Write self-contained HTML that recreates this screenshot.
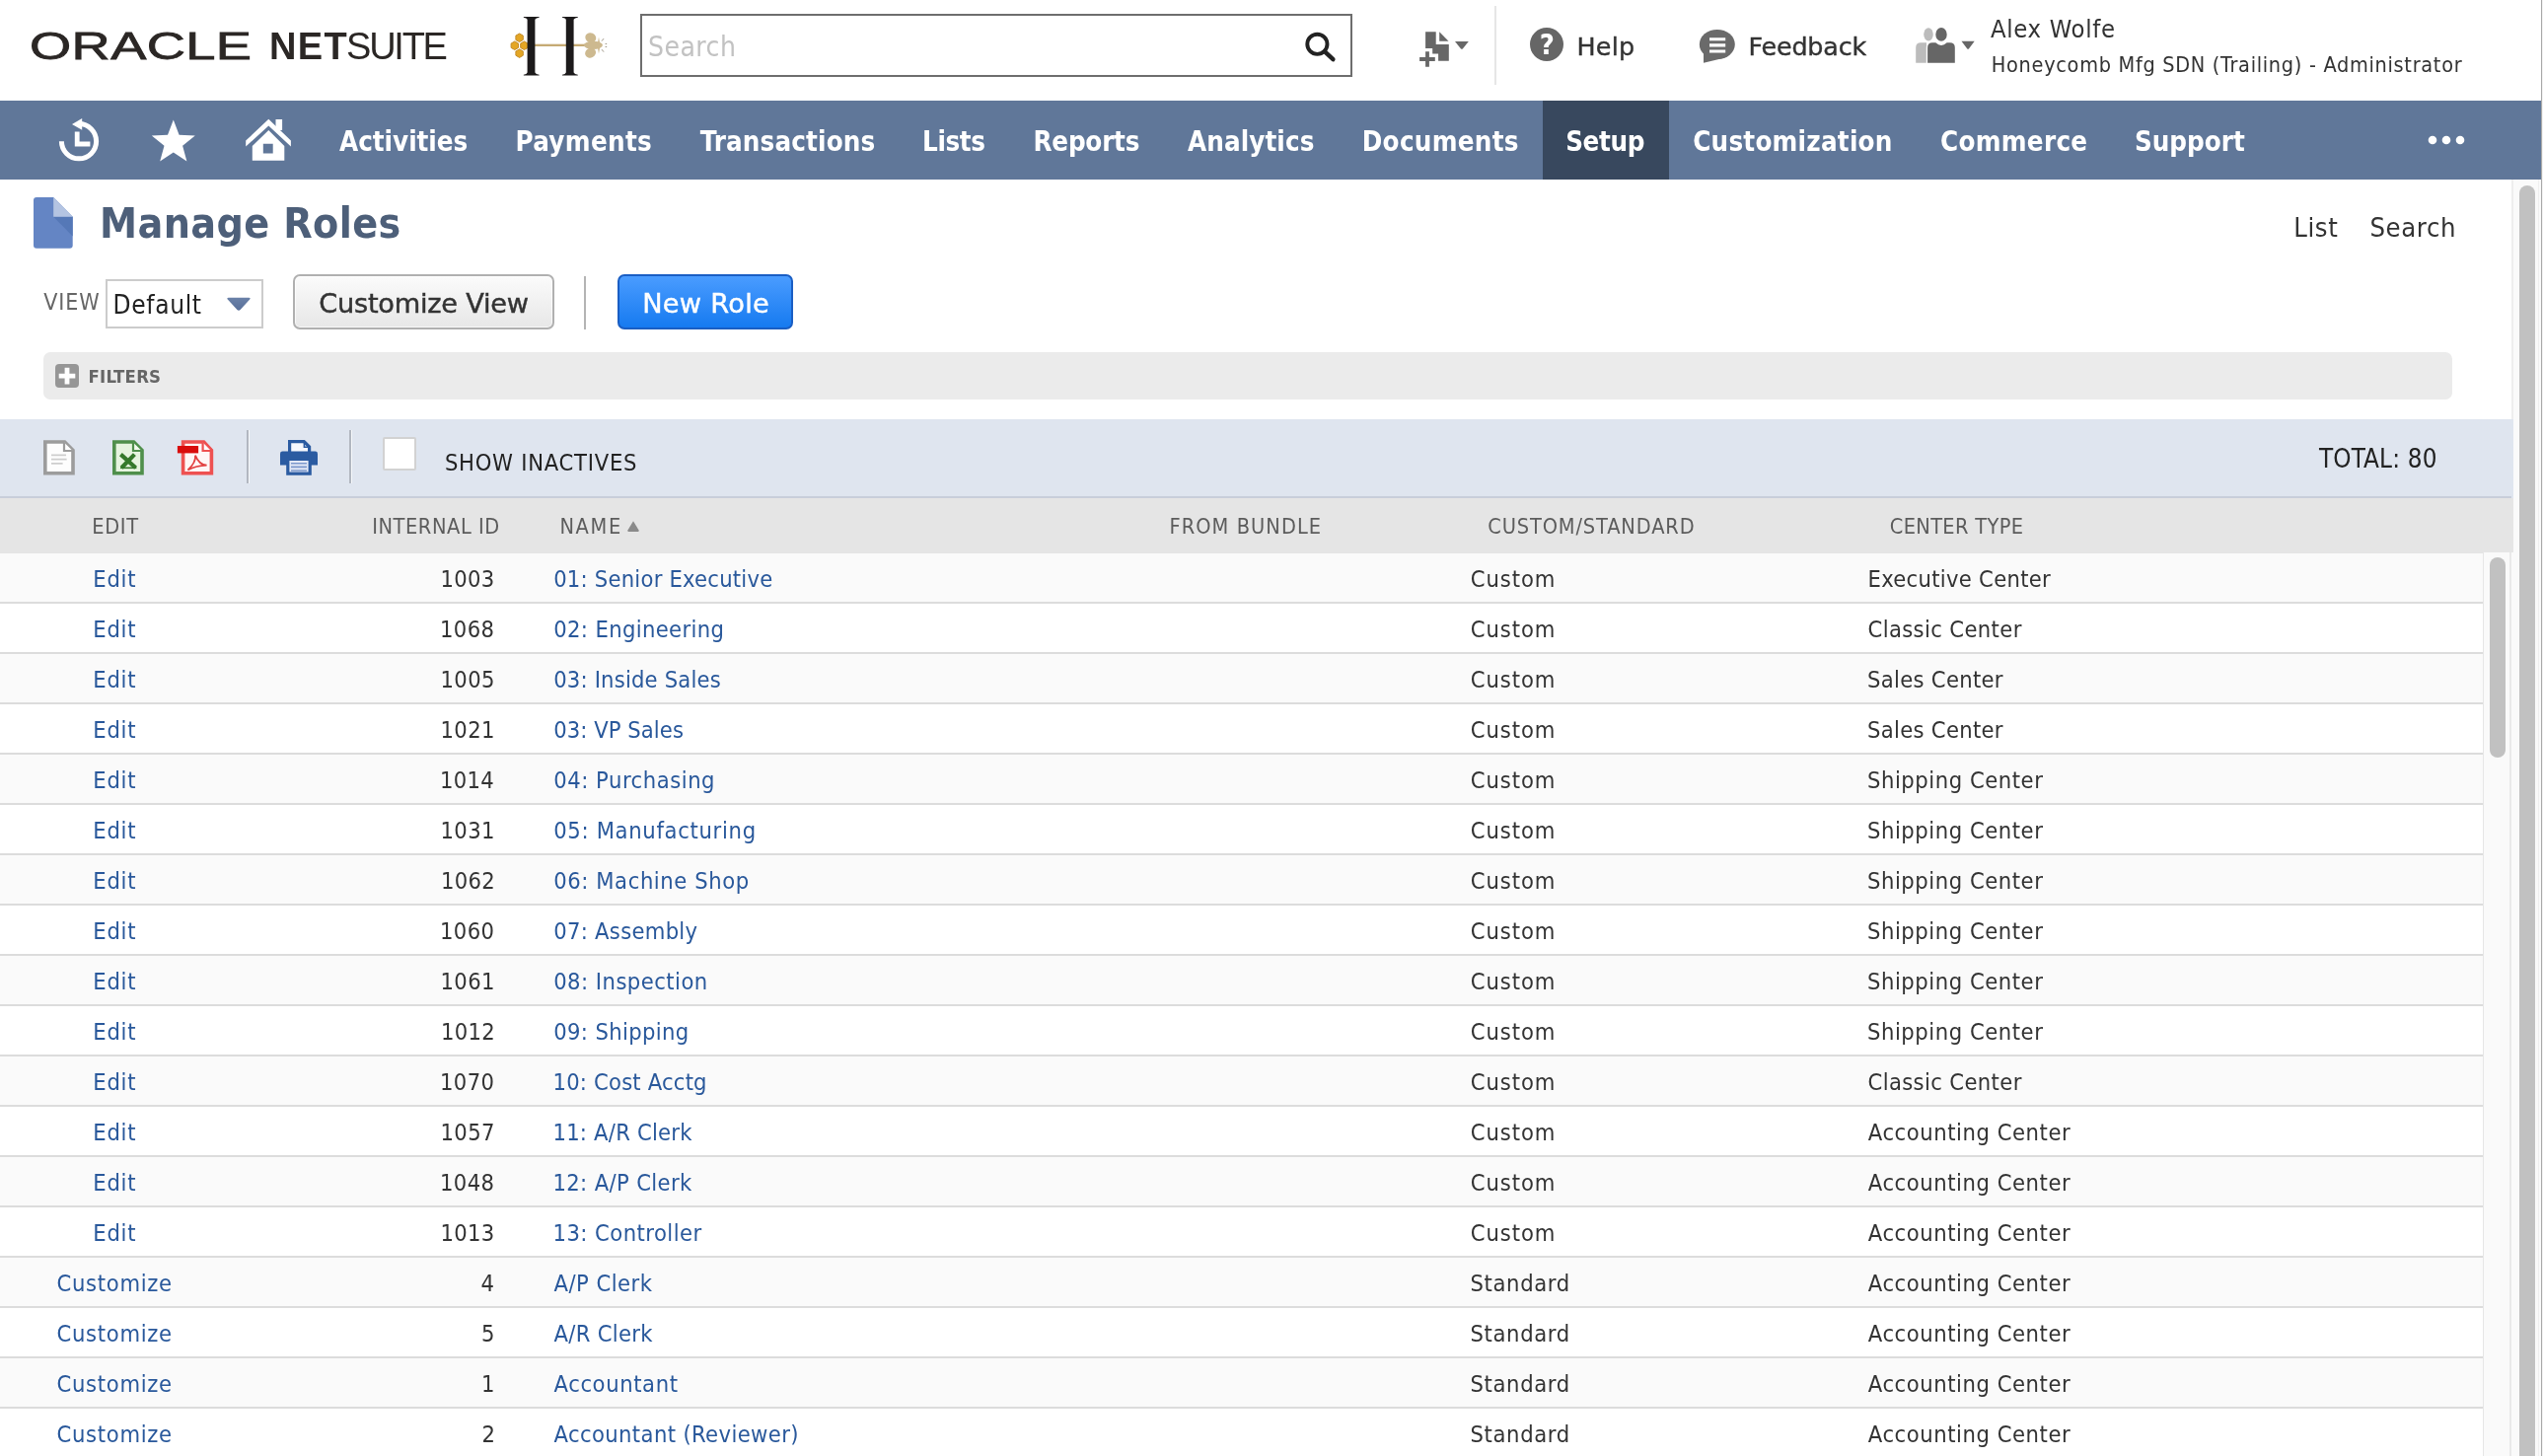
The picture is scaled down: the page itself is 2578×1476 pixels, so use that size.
<!DOCTYPE html>
<html lang="en"><head><meta charset="utf-8"><title>Manage Roles - NetSuite</title>
<style>
html,body{margin:0;padding:0;background:#fff;}
body{width:2578px;height:1476px;overflow:hidden;position:relative;will-change:transform;font-family:'DejaVu Sans Condensed','DejaVu Sans','Liberation Sans',sans-serif;font-stretch:condensed;color:#333;}
.t{position:absolute;white-space:nowrap;line-height:1;}
a.t{text-decoration:none;color:#29589b;}
svg{display:block;overflow:visible;}
</style></head>
<body>
<!-- top header -->
<header>
<div class="t" style="left:29.8px;top:27.2px;font-family:'Liberation Sans',sans-serif;font-stretch:normal;font-size:39.6px;color:#2b2725;transform-origin:0 0;transform:scaleX(1.37);letter-spacing:0.3px;-webkit-text-stroke:0.8px #2b2725;">ORACLE</div>
<div class="t" style="left:272.9px;top:28.3px;font-size:38px;color:#2b2725;font-weight:700;letter-spacing:1.38px;font-family:'Liberation Sans',sans-serif;font-stretch:normal;">NET</div>
<div class="t" style="left:351.1px;top:28.3px;font-size:38px;color:#2b2725;letter-spacing:-2.27px;font-family:'Liberation Sans',sans-serif;font-stretch:normal;">SUITE</div>
<svg style="position:absolute;left:515px;top:14px" width="104" height="64" viewBox="0 0 104 64">
<g fill="#e4a624" stroke="#c48d2c" stroke-width="1"><polygon points="11.6,20.0 15.3,22.1 15.3,26.4 11.6,28.6 7.9,26.5 7.9,22.1"/><polygon points="6.8,27.9 10.5,30.1 10.5,34.4 6.8,36.5 3.1,34.4 3.1,30.1"/><polygon points="16.4,27.9 20.1,30.1 20.1,34.4 16.4,36.5 12.7,34.4 12.7,30.1"/><polygon points="11.6,35.8 15.3,38.0 15.3,42.2 11.6,44.4 7.9,42.2 7.9,38.0"/></g>
<rect x="27" y="30.7" width="53" height="2.3" fill="#c5aa74"/>
<g fill="#1c1a1b"><path d="M15.8 2.9 H31.6 V3.7 Q28.2 4 27.4 5.8 V59.6 Q28.2 61.4 31.6 61.7 V62.5 H15.8 V61.7 Q19 61.4 19.6 59.6 V5.8 Q19 4 15.8 3.7z"/><path d="M15.8 2.9 H31.6 V3.7 Q28.2 4 27.4 5.8 V59.6 Q28.2 61.4 31.6 61.7 V62.5 H15.8 V61.7 Q19 61.4 19.6 59.6 V5.8 Q19 4 15.8 3.7z" transform="translate(39.2 0)"/></g>
<g fill="#cdb98f">
<ellipse cx="83.8" cy="24.2" rx="5.6" ry="4.9" transform="rotate(25 83.8 24.2)"/>
<ellipse cx="83.6" cy="39.6" rx="5.6" ry="4.9" transform="rotate(-25 83.6 39.6)"/>
<ellipse cx="86.4" cy="31.8" rx="9.6" ry="4.1"/>
<polygon points="90.6,31 92,23.4 93.4,31"/><polygon points="90.6,32.6 92,40.6 93.4,32.6"/>
</g>
<g stroke="#9c9484" stroke-width="1" fill="none"><path d="M95 27.6 l2 -2.4 M98.6 30.4 h1.6 M98.6 33.4 h1.6 M95 36.2 l2 2.4"/></g>
</svg>
<div style="position:absolute;left:649px;top:14px;width:722px;height:64px;box-sizing:border-box;border:2px solid #6e6e6e;background:#fff;"></div>
<div class="t" style="left:656.9px;top:34.0px;font-size:28px;color:#c2c2c2;letter-spacing:0.50px;">Search</div>
<svg style="position:absolute;left:1320px;top:30px" width="36" height="34" viewBox="0 0 36 34"><circle cx="15.4" cy="14.8" r="10.1" fill="none" stroke="#222" stroke-width="3.9"/><path d="M22.8 22.2 L31.4 30.2" stroke="#222" stroke-width="4.4" stroke-linecap="round"/></svg>
<svg style="position:absolute;left:1438px;top:30px" width="54" height="40" viewBox="0 0 54 40">
<path d="M7.1 2.2 H17.7 V15.1 H30.8 V31.8 H20.1 V24.6 H14.2 V18.9 H7.1z" fill="#676767"/>
<path d="M21.2 2.3 L30.5 11.8 H21.2z" fill="#676767"/>
<path d="M9 22.2 V37.85 M1.1 30 H16.8" stroke="#676767" stroke-width="3.8"/>
<path d="M37 12.1 H50.8 L45 19.2 Q43.9 20.3 42.8 19.2z" fill="#676767"/>
</svg>
<div style="position:absolute;left:1515px;top:6px;width:2px;height:80px;background:#e6e6e6;"></div>
<div style="position:absolute;left:1551px;top:27.7px;width:34px;height:34.0px;background:#666;border-radius:50%;"></div>
<div class="t" style="left:1560.7px;top:31.2px;font-size:29px;color:#fff;font-weight:700;">?</div>
<div class="t" style="left:1598.5px;top:34.9px;font-size:25.4px;color:#333;letter-spacing:0.27px;font-family:'DejaVu Sans',sans-serif;font-stretch:normal;-webkit-text-stroke:0.4px #333;">Help</div>
<svg style="position:absolute;left:1722px;top:28px" width="40" height="38" viewBox="0 0 40 38">
<ellipse cx="18.8" cy="17" rx="18" ry="15.1" fill="#6a6a6a"/>
<path d="M5 22 V35.8 L27 30.4z" fill="#6a6a6a"/>
<path d="M11 11.8 h16.2 M11 17.9 h16.2 M11 24 h16.2" stroke="#fff" stroke-width="3.1"/>
</svg>
<div class="t" style="left:1772.5px;top:34.9px;font-size:25.4px;color:#333;letter-spacing:-0.18px;font-family:'DejaVu Sans',sans-serif;font-stretch:normal;-webkit-text-stroke:0.4px #333;">Feedback</div>
<svg style="position:absolute;left:1941px;top:26px" width="63" height="40" viewBox="0 0 63 40">
<ellipse cx="14" cy="8.8" rx="4.8" ry="6.6" fill="#bcbcbc"/>
<path d="M1.2 37.8 V22.3 q0 -5 5 -5 H12 V37.8z" fill="#bcbcbc"/>
<ellipse cx="27" cy="8.9" rx="7.1" ry="8.3" fill="#fff"/>
<ellipse cx="27" cy="8.9" rx="5.7" ry="6.9" fill="#666"/>
<path d="M11.8 38.5 V22.3 q0 -6.3 6.3 -6.3 h3.8 q5.1 4.4 10.2 0 h3.7 q6.3 0 6.3 6.3 V38.5z" fill="#fff"/>
<path d="M13.1 37.8 V22.3 q0 -5 5 -5 h3.2 q5.7 5.2 11.4 0 h3.1 q5 0 5 5 V37.8z" fill="#666"/>
<path d="M47.5 15.8 h13.2 l-5.6 7.4 q-1 1 -2 0z" fill="#666"/>
</svg>
<div class="t" style="left:2018.0px;top:16.7px;font-size:25.4px;color:#333;letter-spacing:0.68px;">Alex Wolfe</div>
<div class="t" style="left:2018.8px;top:54.8px;font-size:21.5px;color:#333;letter-spacing:0.70px;">Honeycomb Mfg SDN (Trailing) - Administrator</div>
</header>
<!-- nav bar -->
<nav>
<div style="position:absolute;left:0px;top:102px;width:2576px;height:80px;background:#607799;"></div>
<div style="position:absolute;left:1564px;top:102px;width:128px;height:80px;background:#38485e;"></div>
<svg style="position:absolute;left:58px;top:118px" width="44" height="48" viewBox="0 0 44 48">
<path d="M22 7.6 A17.6 17.6 0 1 1 4.4 25.2" fill="none" stroke="#fff" stroke-width="5"/>
<path d="M15 8 L25.2 2 L25.2 13.8z" fill="#fff"/>
<path d="M20.2 15.4 V28 H33.4" fill="none" stroke="#fff" stroke-width="4.8"/>
</svg>
<svg style="position:absolute;left:150px;top:118px" width="52" height="48" viewBox="0 0 52 48"><polygon points="25.8,3.6 31.6,18.8 47.8,19.6 35.1,29.7 39.4,45.4 25.8,36.5 12.2,45.4 16.5,29.7 3.8,19.6 20.0,18.8" fill="#fff"/></svg>
<svg style="position:absolute;left:246px;top:118px" width="52" height="48" viewBox="0 0 52 48">
<path d="M3.2 24.6 L26.3 2.8 L48.9 24.6 V30.6 L26.3 9.4 L3.2 30.6z" fill="#fff"/>
<rect x="33.5" y="3" width="6.6" height="11" fill="#fff"/>
<path d="M9.8 30 L26.3 14 L42.3 30 V44.8 H9.8z M20.8 27.7 V37.6 H30.7 V27.7z" fill="#fff" fill-rule="evenodd"/>
</svg>
<div class="t" style="left:344.1px;top:129.9px;font-size:27.5px;color:#fff;font-weight:700;letter-spacing:-0.04px;">Activities</div>
<div class="t" style="left:522.5px;top:129.9px;font-size:27.5px;color:#fff;font-weight:700;letter-spacing:0.32px;">Payments</div>
<div class="t" style="left:709.7px;top:129.9px;font-size:27.5px;color:#fff;font-weight:700;letter-spacing:0.14px;">Transactions</div>
<div class="t" style="left:935.1px;top:129.9px;font-size:27.5px;color:#fff;font-weight:700;letter-spacing:-0.44px;">Lists</div>
<div class="t" style="left:1047.5px;top:129.9px;font-size:27.5px;color:#fff;font-weight:700;letter-spacing:-0.23px;">Reports</div>
<div class="t" style="left:1204.0px;top:129.9px;font-size:27.5px;color:#fff;font-weight:700;letter-spacing:0.08px;">Analytics</div>
<div class="t" style="left:1380.8px;top:129.9px;font-size:27.5px;color:#fff;font-weight:700;letter-spacing:0.28px;">Documents</div>
<div class="t" style="left:1587.2px;top:129.9px;font-size:27.5px;color:#fff;font-weight:700;letter-spacing:-0.40px;">Setup</div>
<div class="t" style="left:1716.2px;top:129.9px;font-size:27.5px;color:#fff;font-weight:700;letter-spacing:0.22px;">Customization</div>
<div class="t" style="left:1967.0px;top:129.9px;font-size:27.5px;color:#fff;font-weight:700;letter-spacing:0.28px;">Commerce</div>
<div class="t" style="left:2163.9px;top:129.9px;font-size:27.5px;color:#fff;font-weight:700;">Support</div>
<svg style="position:absolute;left:2460px;top:136px" width="40" height="12" viewBox="0 0 40 12"><circle cx="6" cy="6" r="4.3" fill="#fff"/><circle cx="20" cy="6" r="4.3" fill="#fff"/><circle cx="34" cy="6" r="4.3" fill="#fff"/></svg>
</nav>
<main>
<!-- title -->
<svg style="position:absolute;left:34px;top:200px" width="40" height="52" viewBox="0 0 40 52">
<path d="M3 0 H20.2 L39.7 19.8 V48.7 a3 3 0 0 1 -3 3 H3 a3 3 0 0 1 -3 -3 V3 a3 3 0 0 1 3 -3z" fill="#6485c4"/>
<path d="M20.2 19.8 H39.7 V39.5z" fill="#5578b7"/>
<path d="M20.2 0 L39.7 19.8 H20.2z" fill="#b4c4e2"/>
</svg>
<div class="t" style="left:101.0px;top:206.0px;font-size:42.5px;color:#4d5f79;font-weight:700;letter-spacing:0.39px;">Manage Roles</div>
<div class="t" style="left:2325.3px;top:217.2px;font-size:27.2px;color:#333;letter-spacing:0.58px;">List</div>
<div class="t" style="left:2402.4px;top:217.2px;font-size:27.2px;color:#333;letter-spacing:0.62px;">Search</div>
<div class="t" style="left:44.2px;top:295.2px;font-size:23px;color:#666;letter-spacing:0.92px;">VIEW</div>
<div style="position:absolute;left:107px;top:283px;width:160px;height:50px;box-sizing:border-box;border:2px solid #ccc;background:#fff;"></div>
<div class="t" style="left:114.5px;top:296.0px;font-size:26px;color:#222;letter-spacing:0.67px;">Default</div>
<svg style="position:absolute;left:229px;top:300px" width="26" height="17" viewBox="0 0 26 17"><defs><linearGradient id="ga" x1="0" y1="0" x2="0" y2="1"><stop offset="0" stop-color="#6a81a8"/><stop offset="1" stop-color="#586f99"/></linearGradient></defs><path d="M2.6 1.8 H23.4 Q25.4 2 24.2 3.6 L14.6 14 Q13 15.6 11.4 14 L1.8 3.6 Q0.6 2 2.6 1.8z" fill="url(#ga)"/></svg>
<div style="position:absolute;left:297px;top:278px;width:265px;height:56px;box-sizing:border-box;border:2px solid #b0b0b0;border-radius:7px;background:linear-gradient(#fbfbfb,#e7e7e7);box-shadow:inset 0 0 0 1px rgba(255,255,255,.7);"></div>
<div class="t" style="left:323.2px;top:293.8px;font-size:27.2px;color:#333;letter-spacing:-0.23px;font-family:'DejaVu Sans',sans-serif;font-stretch:normal;-webkit-text-stroke:0.45px #333;">Customize View</div>
<div style="position:absolute;left:592px;top:280px;width:2px;height:54px;background:#b4b4b4;"></div>
<div style="position:absolute;left:626px;top:278px;width:178px;height:56px;box-sizing:border-box;border:2px solid #1a5ec4;border-radius:7px;background:linear-gradient(#4a9cff,#167af0);"></div>
<div class="t" style="left:651.2px;top:293.8px;font-size:27.2px;color:#fff;letter-spacing:0.29px;font-family:'DejaVu Sans',sans-serif;font-stretch:normal;-webkit-text-stroke:0.45px #fff;">New Role</div>
<div style="position:absolute;left:44px;top:357px;width:2442px;height:48px;background:#ebebeb;border-radius:7px;"></div>
<svg style="position:absolute;left:55px;top:368px" width="26" height="26" viewBox="0 0 26 26"><rect x="1" y="1.1" width="24" height="24" rx="4" fill="#969696"/><path d="M13 4.8 V21.4 M4.7 13.1 H21.3" stroke="#fff" stroke-width="4.8"/></svg>
<div class="t" style="left:89.5px;top:372.6px;font-size:18.4px;color:#666;font-weight:700;letter-spacing:0.22px;">FILTERS</div>
<div style="position:absolute;left:0px;top:425px;width:2548px;height:80px;background:#dfe5ef;"></div>
<div style="position:absolute;left:0px;top:503px;width:2546px;height:2px;background:#c8ceda;"></div>
<svg style="position:absolute;left:43px;top:445px" width="34" height="38" viewBox="0 0 34 38">
<path d="M2.8 3 H22.6 L31 11.4 V34.8 H2.8z" fill="#fdfdfd" stroke="#9c9c9c" stroke-width="3.6"/>
<path d="M22 3.4 V12 H30.6" fill="#fff" stroke="#9c9c9c" stroke-width="2.2"/>
<path d="M9 16.4 H24 M9 20.6 H24.6 M9 24.8 H20.6" stroke="#cdcdcd" stroke-width="1.8"/>
</svg>
<svg style="position:absolute;left:113px;top:445px" width="34" height="38" viewBox="0 0 34 38">
<path d="M2.8 3 H22.6 L31 11.4 V34.8 H2.8z" fill="#e6f4df" stroke="#4f8f4b" stroke-width="3.6"/>
<path d="M22 3.4 V12 H30.6" fill="#f3faef" stroke="#4f8f4b" stroke-width="2.2"/>
<path d="M9.4 15.6 L24.6 29.2 M23.4 15.6 L10.2 29.2" stroke="#35792b" stroke-width="4.2"/>
<path d="M9 29.3 H25.4" stroke="#35792b" stroke-width="1.6"/>
</svg>
<svg style="position:absolute;left:179px;top:445px" width="38" height="38" viewBox="0 0 38 38">
<path d="M6.6 3 H27.6 L35.4 11.4 V34.8 H6.6z" fill="#fff6f6" stroke="#ee5151" stroke-width="3.6"/>
<path d="M26.6 3.4 V12 H35" fill="#fff" stroke="#ee5151" stroke-width="2.2"/>
<rect x="0.9" y="7" width="21.2" height="7.4" fill="#d80c0c"/>
<path d="M11.4 31.4 C16 27.4 19.4 21.6 19 16.6 C21.6 23.2 25.4 26.4 30.6 26.6 C24.4 26.8 17 28.4 11.4 31.4z" fill="none" stroke="#e24040" stroke-width="1.7"/>
</svg>
<svg style="position:absolute;left:283px;top:445px" width="40" height="38" viewBox="0 0 40 38">
<path d="M10.6 2.6 H25.2 L30.6 8 V15 H10.6z" fill="#f6f8fd" stroke="#2b5ba1" stroke-width="3.2"/>
<path d="M25.4 3 V8.2 H30.4" fill="none" stroke="#2b5ba1" stroke-width="1.6"/>
<path d="M3.4 12.6 H36.6 a2.4 2.4 0 0 1 2.4 2.4 V26.6 H1 V15 A2.4 2.4 0 0 1 3.4 12.6z" fill="#2b5ba1"/>
<path d="M8.8 20.4 H31.2 V35.2 H8.8z" fill="#e3e9f6" stroke="#2b5ba1" stroke-width="3.2"/>
<path d="M12 24.8 H28 M12 28.4 H28 M12 32 H28" stroke="#7c98cc" stroke-width="1.6"/>
</svg>
<div style="position:absolute;left:250px;top:436px;width:2.1999999999999886px;height:54px;background:#b2b7c0;border-right:1.4px solid #f6f8fb;"></div>
<div style="position:absolute;left:354.2px;top:436px;width:2.1999999999999886px;height:54px;background:#b2b7c0;border-right:1.4px solid #f6f8fb;"></div>
<div style="position:absolute;left:388px;top:443px;width:34px;height:34px;box-sizing:border-box;border:2px solid #d2d2d2;background:#fff;border-radius:2px;"></div>
<div class="t" style="left:450.9px;top:457.8px;font-size:23.5px;color:#222;letter-spacing:0.75px;">SHOW INACTIVES</div>
<div class="t" style="left:2351.0px;top:452.7px;font-size:25.8px;color:#222;letter-spacing:0.16px;">TOTAL: 80</div>
<!-- list -->
<section>
<div style="position:absolute;left:0px;top:505px;width:2548px;height:56px;background:#e5e5e5;"></div>
<div class="t" style="left:93.2px;top:523.2px;font-size:21.6px;color:#5c5c5c;letter-spacing:0.67px;">EDIT</div>
<div class="t" style="left:377.2px;top:523.2px;font-size:21.6px;color:#5c5c5c;letter-spacing:0.57px;">INTERNAL ID</div>
<div class="t" style="left:567.4px;top:523.2px;font-size:21.6px;color:#5c5c5c;letter-spacing:1.70px;">NAME</div>
<svg style="position:absolute;left:635px;top:527px" width="14" height="13" viewBox="0 0 14 13"><path d="M7 1.2 L12.6 10.4 Q13 12 11.6 12 H2.4 Q1 12 1.4 10.4z" fill="#8a8a8a"/></svg>
<div class="t" style="left:1185.4px;top:523.2px;font-size:21.6px;color:#5c5c5c;letter-spacing:1.07px;">FROM BUNDLE</div>
<div class="t" style="left:1508.2px;top:523.2px;font-size:21.6px;color:#5c5c5c;letter-spacing:0.87px;">CUSTOM/STANDARD</div>
<div class="t" style="left:1915.8px;top:523.2px;font-size:21.6px;color:#5c5c5c;letter-spacing:0.33px;">CENTER TYPE</div>
<div style="position:absolute;left:0px;top:561px;width:2517px;height:49px;background:#fafafa;border-bottom:2px solid #dcdcdc;"></div>
<a class="t" style="left:94.3px;top:575.8px;font-size:23.5px;letter-spacing:0.77px;">Edit</a>
<div class="t" style="left:446.4px;top:575.8px;font-size:23.5px;color:#333;letter-spacing:0.32px;">1003</div>
<a class="t" style="left:561.2px;top:575.8px;font-size:23.5px;letter-spacing:0.23px;">01: Senior Executive</a>
<div class="t" style="left:1490.8px;top:575.8px;font-size:23.5px;color:#333;letter-spacing:0.92px;">Custom</div>
<div class="t" style="left:1893.5px;top:575.8px;font-size:23.5px;color:#333;letter-spacing:0.30px;">Executive Center</div>
<div style="position:absolute;left:0px;top:612px;width:2517px;height:49px;background:#fff;border-bottom:2px solid #dcdcdc;"></div>
<a class="t" style="left:94.3px;top:626.8px;font-size:23.5px;letter-spacing:0.77px;">Edit</a>
<div class="t" style="left:446.1px;top:626.8px;font-size:23.5px;color:#333;letter-spacing:0.32px;">1068</div>
<a class="t" style="left:561.2px;top:626.8px;font-size:23.5px;letter-spacing:0.37px;">02: Engineering</a>
<div class="t" style="left:1490.8px;top:626.8px;font-size:23.5px;color:#333;letter-spacing:0.92px;">Custom</div>
<div class="t" style="left:1893.5px;top:626.8px;font-size:23.5px;color:#333;letter-spacing:0.37px;">Classic Center</div>
<div style="position:absolute;left:0px;top:663px;width:2517px;height:49px;background:#fafafa;border-bottom:2px solid #dcdcdc;"></div>
<a class="t" style="left:94.3px;top:677.8px;font-size:23.5px;letter-spacing:0.77px;">Edit</a>
<div class="t" style="left:446.6px;top:677.8px;font-size:23.5px;color:#333;letter-spacing:0.32px;">1005</div>
<a class="t" style="left:561.2px;top:677.8px;font-size:23.5px;letter-spacing:0.19px;">03: Inside Sales</a>
<div class="t" style="left:1490.8px;top:677.8px;font-size:23.5px;color:#333;letter-spacing:0.92px;">Custom</div>
<div class="t" style="left:1893.1px;top:677.8px;font-size:23.5px;color:#333;letter-spacing:0.29px;">Sales Center</div>
<div style="position:absolute;left:0px;top:714px;width:2517px;height:49px;background:#fff;border-bottom:2px solid #dcdcdc;"></div>
<a class="t" style="left:94.3px;top:728.8px;font-size:23.5px;letter-spacing:0.77px;">Edit</a>
<div class="t" style="left:446.6px;top:728.8px;font-size:23.5px;color:#333;letter-spacing:0.32px;">1021</div>
<a class="t" style="left:561.2px;top:728.8px;font-size:23.5px;letter-spacing:0.07px;">03: VP Sales</a>
<div class="t" style="left:1490.8px;top:728.8px;font-size:23.5px;color:#333;letter-spacing:0.92px;">Custom</div>
<div class="t" style="left:1893.1px;top:728.8px;font-size:23.5px;color:#333;letter-spacing:0.29px;">Sales Center</div>
<div style="position:absolute;left:0px;top:765px;width:2517px;height:49px;background:#fafafa;border-bottom:2px solid #dcdcdc;"></div>
<a class="t" style="left:94.3px;top:779.8px;font-size:23.5px;letter-spacing:0.77px;">Edit</a>
<div class="t" style="left:445.9px;top:779.8px;font-size:23.5px;color:#333;letter-spacing:0.32px;">1014</div>
<a class="t" style="left:561.2px;top:779.8px;font-size:23.5px;letter-spacing:0.54px;">04: Purchasing</a>
<div class="t" style="left:1490.8px;top:779.8px;font-size:23.5px;color:#333;letter-spacing:0.92px;">Custom</div>
<div class="t" style="left:1893.0px;top:779.8px;font-size:23.5px;color:#333;letter-spacing:0.55px;">Shipping Center</div>
<div style="position:absolute;left:0px;top:816px;width:2517px;height:49px;background:#fff;border-bottom:2px solid #dcdcdc;"></div>
<a class="t" style="left:94.3px;top:830.8px;font-size:23.5px;letter-spacing:0.77px;">Edit</a>
<div class="t" style="left:446.6px;top:830.8px;font-size:23.5px;color:#333;letter-spacing:0.32px;">1031</div>
<a class="t" style="left:561.2px;top:830.8px;font-size:23.5px;letter-spacing:0.69px;">05: Manufacturing</a>
<div class="t" style="left:1490.8px;top:830.8px;font-size:23.5px;color:#333;letter-spacing:0.92px;">Custom</div>
<div class="t" style="left:1893.0px;top:830.8px;font-size:23.5px;color:#333;letter-spacing:0.55px;">Shipping Center</div>
<div style="position:absolute;left:0px;top:867px;width:2517px;height:49px;background:#fafafa;border-bottom:2px solid #dcdcdc;"></div>
<a class="t" style="left:94.3px;top:881.8px;font-size:23.5px;letter-spacing:0.77px;">Edit</a>
<div class="t" style="left:446.9px;top:881.8px;font-size:23.5px;color:#333;letter-spacing:0.32px;">1062</div>
<a class="t" style="left:561.2px;top:881.8px;font-size:23.5px;letter-spacing:0.59px;">06: Machine Shop</a>
<div class="t" style="left:1490.8px;top:881.8px;font-size:23.5px;color:#333;letter-spacing:0.92px;">Custom</div>
<div class="t" style="left:1893.0px;top:881.8px;font-size:23.5px;color:#333;letter-spacing:0.55px;">Shipping Center</div>
<div style="position:absolute;left:0px;top:918px;width:2517px;height:49px;background:#fff;border-bottom:2px solid #dcdcdc;"></div>
<a class="t" style="left:94.3px;top:932.8px;font-size:23.5px;letter-spacing:0.77px;">Edit</a>
<div class="t" style="left:446.1px;top:932.8px;font-size:23.5px;color:#333;letter-spacing:0.32px;">1060</div>
<a class="t" style="left:561.2px;top:932.8px;font-size:23.5px;letter-spacing:0.29px;">07: Assembly</a>
<div class="t" style="left:1490.8px;top:932.8px;font-size:23.5px;color:#333;letter-spacing:0.92px;">Custom</div>
<div class="t" style="left:1893.0px;top:932.8px;font-size:23.5px;color:#333;letter-spacing:0.55px;">Shipping Center</div>
<div style="position:absolute;left:0px;top:969px;width:2517px;height:49px;background:#fafafa;border-bottom:2px solid #dcdcdc;"></div>
<a class="t" style="left:94.3px;top:983.8px;font-size:23.5px;letter-spacing:0.77px;">Edit</a>
<div class="t" style="left:446.6px;top:983.8px;font-size:23.5px;color:#333;letter-spacing:0.32px;">1061</div>
<a class="t" style="left:561.2px;top:983.8px;font-size:23.5px;letter-spacing:0.47px;">08: Inspection</a>
<div class="t" style="left:1490.8px;top:983.8px;font-size:23.5px;color:#333;letter-spacing:0.92px;">Custom</div>
<div class="t" style="left:1893.0px;top:983.8px;font-size:23.5px;color:#333;letter-spacing:0.55px;">Shipping Center</div>
<div style="position:absolute;left:0px;top:1020px;width:2517px;height:49px;background:#fff;border-bottom:2px solid #dcdcdc;"></div>
<a class="t" style="left:94.3px;top:1034.8px;font-size:23.5px;letter-spacing:0.77px;">Edit</a>
<div class="t" style="left:446.9px;top:1034.8px;font-size:23.5px;color:#333;letter-spacing:0.32px;">1012</div>
<a class="t" style="left:561.2px;top:1034.8px;font-size:23.5px;letter-spacing:0.37px;">09: Shipping</a>
<div class="t" style="left:1490.8px;top:1034.8px;font-size:23.5px;color:#333;letter-spacing:0.92px;">Custom</div>
<div class="t" style="left:1893.0px;top:1034.8px;font-size:23.5px;color:#333;letter-spacing:0.55px;">Shipping Center</div>
<div style="position:absolute;left:0px;top:1071px;width:2517px;height:49px;background:#fafafa;border-bottom:2px solid #dcdcdc;"></div>
<a class="t" style="left:94.3px;top:1085.8px;font-size:23.5px;letter-spacing:0.77px;">Edit</a>
<div class="t" style="left:446.1px;top:1085.8px;font-size:23.5px;color:#333;letter-spacing:0.32px;">1070</div>
<a class="t" style="left:560.5px;top:1085.8px;font-size:23.5px;letter-spacing:0.20px;">10: Cost Acctg</a>
<div class="t" style="left:1490.8px;top:1085.8px;font-size:23.5px;color:#333;letter-spacing:0.92px;">Custom</div>
<div class="t" style="left:1893.5px;top:1085.8px;font-size:23.5px;color:#333;letter-spacing:0.37px;">Classic Center</div>
<div style="position:absolute;left:0px;top:1122px;width:2517px;height:49px;background:#fff;border-bottom:2px solid #dcdcdc;"></div>
<a class="t" style="left:94.3px;top:1136.8px;font-size:23.5px;letter-spacing:0.77px;">Edit</a>
<div class="t" style="left:446.6px;top:1136.8px;font-size:23.5px;color:#333;letter-spacing:0.32px;">1057</div>
<a class="t" style="left:560.5px;top:1136.8px;font-size:23.5px;letter-spacing:0.22px;">11: A/R Clerk</a>
<div class="t" style="left:1490.8px;top:1136.8px;font-size:23.5px;color:#333;letter-spacing:0.92px;">Custom</div>
<div class="t" style="left:1893.8px;top:1136.8px;font-size:23.5px;color:#333;letter-spacing:0.56px;">Accounting Center</div>
<div style="position:absolute;left:0px;top:1173px;width:2517px;height:49px;background:#fafafa;border-bottom:2px solid #dcdcdc;"></div>
<a class="t" style="left:94.3px;top:1187.8px;font-size:23.5px;letter-spacing:0.77px;">Edit</a>
<div class="t" style="left:446.1px;top:1187.8px;font-size:23.5px;color:#333;letter-spacing:0.32px;">1048</div>
<a class="t" style="left:560.5px;top:1187.8px;font-size:23.5px;letter-spacing:0.36px;">12: A/P Clerk</a>
<div class="t" style="left:1490.8px;top:1187.8px;font-size:23.5px;color:#333;letter-spacing:0.92px;">Custom</div>
<div class="t" style="left:1893.8px;top:1187.8px;font-size:23.5px;color:#333;letter-spacing:0.56px;">Accounting Center</div>
<div style="position:absolute;left:0px;top:1224px;width:2517px;height:49px;background:#fff;border-bottom:2px solid #dcdcdc;"></div>
<a class="t" style="left:94.3px;top:1238.8px;font-size:23.5px;letter-spacing:0.77px;">Edit</a>
<div class="t" style="left:446.4px;top:1238.8px;font-size:23.5px;color:#333;letter-spacing:0.32px;">1013</div>
<a class="t" style="left:560.5px;top:1238.8px;font-size:23.5px;letter-spacing:0.46px;">13: Controller</a>
<div class="t" style="left:1490.8px;top:1238.8px;font-size:23.5px;color:#333;letter-spacing:0.92px;">Custom</div>
<div class="t" style="left:1893.8px;top:1238.8px;font-size:23.5px;color:#333;letter-spacing:0.56px;">Accounting Center</div>
<div style="position:absolute;left:0px;top:1275px;width:2517px;height:49px;background:#fafafa;border-bottom:2px solid #dcdcdc;"></div>
<a class="t" style="left:57.6px;top:1289.8px;font-size:23.5px;letter-spacing:0.68px;">Customize</a>
<div class="t" style="left:487.4px;top:1289.8px;font-size:23.5px;color:#333;letter-spacing:0.32px;">4</div>
<a class="t" style="left:561.5px;top:1289.8px;font-size:23.5px;letter-spacing:0.47px;">A/P Clerk</a>
<div class="t" style="left:1490.5px;top:1289.8px;font-size:23.5px;color:#333;letter-spacing:0.65px;">Standard</div>
<div class="t" style="left:1893.8px;top:1289.8px;font-size:23.5px;color:#333;letter-spacing:0.56px;">Accounting Center</div>
<div style="position:absolute;left:0px;top:1326px;width:2517px;height:49px;background:#fff;border-bottom:2px solid #dcdcdc;"></div>
<a class="t" style="left:57.6px;top:1340.8px;font-size:23.5px;letter-spacing:0.68px;">Customize</a>
<div class="t" style="left:488.1px;top:1340.8px;font-size:23.5px;color:#333;letter-spacing:0.32px;">5</div>
<a class="t" style="left:561.5px;top:1340.8px;font-size:23.5px;letter-spacing:0.31px;">A/R Clerk</a>
<div class="t" style="left:1490.5px;top:1340.8px;font-size:23.5px;color:#333;letter-spacing:0.65px;">Standard</div>
<div class="t" style="left:1893.8px;top:1340.8px;font-size:23.5px;color:#333;letter-spacing:0.56px;">Accounting Center</div>
<div style="position:absolute;left:0px;top:1377px;width:2517px;height:49px;background:#fafafa;border-bottom:2px solid #dcdcdc;"></div>
<a class="t" style="left:57.6px;top:1391.8px;font-size:23.5px;letter-spacing:0.68px;">Customize</a>
<div class="t" style="left:488.1px;top:1391.8px;font-size:23.5px;color:#333;letter-spacing:0.32px;">1</div>
<a class="t" style="left:561.5px;top:1391.8px;font-size:23.5px;letter-spacing:0.61px;">Accountant</a>
<div class="t" style="left:1490.5px;top:1391.8px;font-size:23.5px;color:#333;letter-spacing:0.65px;">Standard</div>
<div class="t" style="left:1893.8px;top:1391.8px;font-size:23.5px;color:#333;letter-spacing:0.56px;">Accounting Center</div>
<div style="position:absolute;left:0px;top:1428px;width:2517px;height:49px;background:#fff;border-bottom:2px solid #dcdcdc;"></div>
<a class="t" style="left:57.6px;top:1442.8px;font-size:23.5px;letter-spacing:0.68px;">Customize</a>
<div class="t" style="left:488.4px;top:1442.8px;font-size:23.5px;color:#333;letter-spacing:0.32px;">2</div>
<a class="t" style="left:561.5px;top:1442.8px;font-size:23.5px;letter-spacing:0.39px;">Accountant (Reviewer)</a>
<div class="t" style="left:1490.5px;top:1442.8px;font-size:23.5px;color:#333;letter-spacing:0.65px;">Standard</div>
<div class="t" style="left:1893.8px;top:1442.8px;font-size:23.5px;color:#333;letter-spacing:0.56px;">Accounting Center</div>
</section>
</main>
<!-- scrollbars -->
<div style="position:absolute;left:2517px;top:560px;width:31px;height:916px;background:#fafafa;box-sizing:border-box;border-left:1.5px solid #e6e6e6;"></div>
<div style="position:absolute;left:2544px;top:560px;width:2px;height:916px;background:#e9e9e9;"></div>
<div style="position:absolute;left:2524px;top:565px;width:16px;height:203px;background:#c1c1c1;border-radius:8px;"></div>
<div style="position:absolute;left:2546px;top:182px;width:2px;height:243px;background:#eeeeee;"></div>
<div style="position:absolute;left:2548px;top:182px;width:28px;height:1294px;background:#fafafa;"></div>
<div style="position:absolute;left:2554px;top:187.6px;width:16px;height:1312.4px;background:#c1c1c1;border-radius:8px;"></div>
<div style="position:absolute;left:2572.6px;top:182px;width:1.800000000000182px;height:1294px;background:#f0f0f0;"></div>
<div style="position:absolute;left:2576px;top:0px;width:1px;height:1476px;background:#a9a9a9;"></div>
<div style="position:absolute;left:2577px;top:0px;width:1px;height:1476px;background:#f2f2f2;"></div>
</body></html>
